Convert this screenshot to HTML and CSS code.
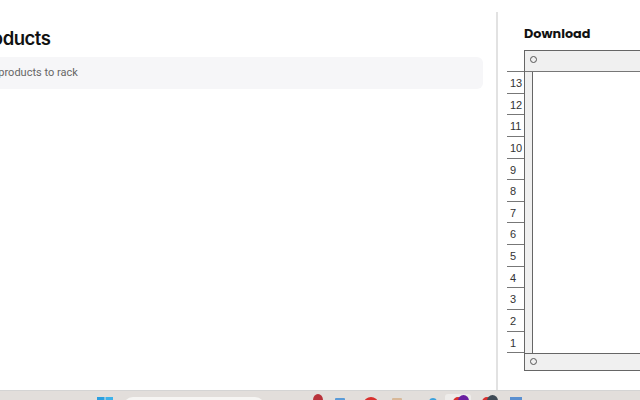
FILE: index.html
```html
<!DOCTYPE html>
<html lang="en">
<head>
<meta charset="utf-8">
<title>Products</title>
<link rel="stylesheet" href="styles.css">
</head>
<body>
<div class="page">
  <main class="main">
    <section class="products">
      <h1 class="title">Products</h1>
      <div class="notice">Add products to rack</div>
    </section>
    <aside class="side">
      <h2 class="download">Download</h2>
      <div class="rack-wrap">
        <ol class="units">
          <li>13</li><li>12</li><li>11</li><li>10</li><li>9</li><li>8</li><li>7</li>
          <li>6</li><li>5</li><li>4</li><li>3</li><li>2</li><li>1</li>
        </ol>
        <div class="rack">
          <div class="bar bar-top"><span class="hole"></span></div>
          <div class="body"><div class="rail"></div><div class="inner"></div></div>
          <div class="bar bar-bottom"><span class="hole"></span></div>
        </div>
      </div>
    </aside>
  </main>
  <footer class="taskbar">
    <svg class="ic win" width="16" height="10" viewBox="0 0 16 10"><rect width="7.5" height="10" fill="#2b9fe0"/><rect x="8.5" width="7.5" height="10" fill="#3db2ea"/></svg>
    <div class="search"></div>
    <span class="blob b1"></span>
    <span class="blob b2"></span>
    <span class="blob b3"></span>
    <span class="blob b4"></span>
    <span class="blob b5"></span>
    <span class="blob b6"></span>
    <span class="blob b7"></span>
    <span class="blob b8"></span>
    <span class="blob b9"></span>
    <span class="blob b10"></span>
    <span class="blob b11"></span>
  </footer>
</div>
</body>
</html>
```
FILE: styles.css
```css
* { box-sizing: border-box; }
html, body { margin: 0; height: 100%; }
body { overflow: hidden; background: #fff; font-family: Inter, "Liberation Sans", sans-serif; }
.page { width: 640px; height: 400px; display: flex; flex-direction: column; overflow: hidden; }
.main { flex: none; height: 390px; display: flex; padding-top: 12px; overflow: hidden; }
.products { flex: none; width: 496px; padding: 14px 13px 0 0; overflow: hidden; }
.title { margin: 0 0 0 -26px; font-size: 18.5px; line-height: 24px; font-weight: 600; letter-spacing: -0.5px; color: #111; white-space: nowrap; }
.notice { margin: 7px 0 0 -40px; height: 32px; padding-left: 16px; font-family: Roboto, sans-serif; font-size: 11px; line-height: 32px; color: #666; background: #f6f6f8; border-radius: 6px; white-space: nowrap; }
.side { flex: none; width: 144px; border-left: 2px solid #e2e2e2; padding: 13px 0 0 26px; }
.download { margin: 0 0 7px; font-family: Poppins, Inter, sans-serif; font-size: 12.8px; line-height: 18px; font-weight: 700; color: #111; }
.rack-wrap { position: relative; margin-right: -40px; height: 321px; }
.rack { height: 321px; border: 1px solid #666; border-right: 0; display: flex; flex-direction: column; }
.bar { flex: none; background: #f0f0f0; display: flex; padding-left: 5px; }
.bar-top { height: 21px; border-bottom: 1px solid #777; padding-top: 5px; }
.bar-bottom { height: 17px; border-top: 1px solid #666; padding-top: 4px; }
.hole { width: 7px; height: 7px; border: 1px solid #555; border-radius: 50%; }
.body { flex: 1; display: flex; }
.rail { width: 8px; background: #f0f0f0; border-right: 1px solid #666; }
.inner { flex: 1; background: #fff; }
.units { position: absolute; left: -17px; top: 21px; margin: 0; padding: 0; list-style: none; width: 17px; border-top: 1px solid #777; }
.units li { height: 21.65px; border-bottom: 1px solid #777; font-family: "Liberation Sans", sans-serif; font-size: 11px; line-height: 22px; color: #333; padding-left: 3px; }
.taskbar { flex: none; height: 10px; position: relative; overflow: hidden; background: #e2dedb; border-top: 1px solid #d4d4d4; }
.ic { position: absolute; }
.win { left: 97px; top: 6px; }
.search { position: absolute; left: 123px; top: 6px; width: 142px; height: 20px; border-radius: 10px; background: #f6f5f3; }
.blob { position: absolute; border-radius: 50%; }
.b1 { left: 313px; top: 3px; width: 10px; height: 12px; background: #b8323a; }
.b2 { left: 335px; top: 7px; width: 10px; height: 10px; border-radius: 1px; background: #5a9bd8; }
.b3 { left: 364px; top: 6px; width: 14px; height: 12px; background: #d8302e; }
.b4 { left: 392px; top: 7px; width: 10px; height: 8px; border-radius: 1px; background: #d8b898; }
.b5 { left: 429px; top: 7px; width: 8px; height: 8px; background: #3aa0dc; }
.b6 { left: 445px; top: 3px; width: 26px; height: 20px; border-radius: 3px; background: #eeecea; }
.b7 { left: 453px; top: 6px; width: 10px; height: 10px; background: #d8302e; }
.b8 { left: 458px; top: 4px; width: 11px; height: 12px; background: #6a1fa0; }
.b9 { left: 482px; top: 6px; width: 10px; height: 10px; background: #d8302e; }
.b10 { left: 487px; top: 4px; width: 11px; height: 12px; background: #3f4a55; }
.b11 { left: 510px; top: 6px; width: 12px; height: 6px; border-radius: 0; background: #5a8fd0; }
```
